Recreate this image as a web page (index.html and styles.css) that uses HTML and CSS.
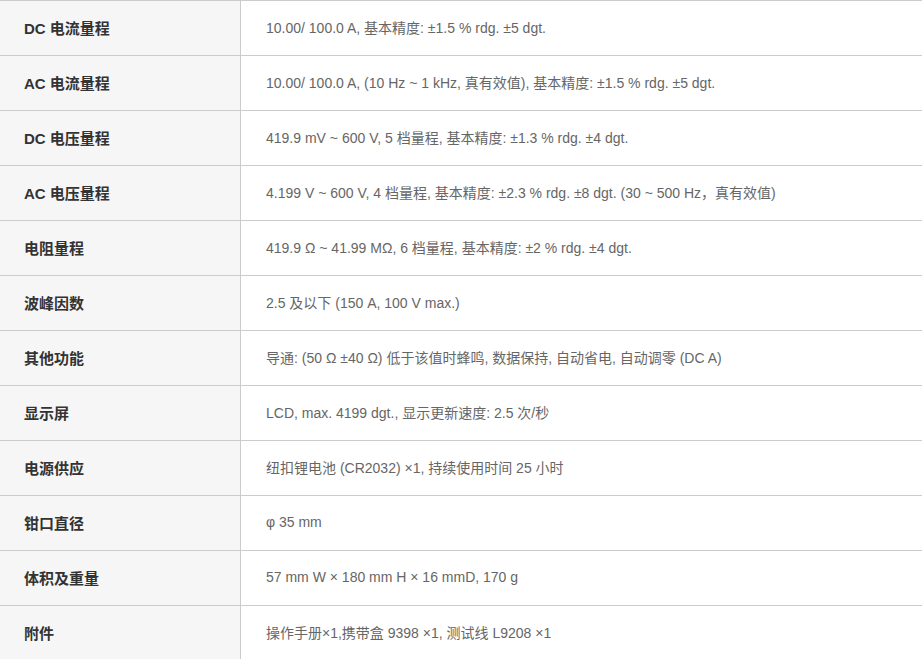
FILE: index.html
```html
<!DOCTYPE html>
<html lang="zh-CN">
<head>
<meta charset="utf-8">
<title>规格</title>
<link rel="stylesheet" href="styles.css">
</head>
<body>
<table class="spec">
<tbody>
<tr><th>DC 电流量程</th><td>10.00/ 100.0 A, 基本精度: ±1.5 % rdg. ±5 dgt.</td></tr>
<tr><th>AC 电流量程</th><td>10.00/ 100.0 A, (10 Hz ~ 1 kHz, 真有效值), 基本精度: ±1.5 % rdg. ±5 dgt.</td></tr>
<tr><th>DC 电压量程</th><td>419.9 mV ~ 600 V, 5 档量程, 基本精度: ±1.3 % rdg. ±4 dgt.</td></tr>
<tr><th>AC 电压量程</th><td>4.199 V ~ 600 V, 4 档量程, 基本精度: ±2.3 % rdg. ±8 dgt. (30 ~ 500 Hz，真有效值)</td></tr>
<tr><th>电阻量程</th><td>419.9 Ω ~ 41.99 MΩ, 6 档量程, 基本精度: ±2 % rdg. ±4 dgt.</td></tr>
<tr><th>波峰因数</th><td>2.5 及以下 (150 A, 100 V max.)</td></tr>
<tr><th>其他功能</th><td>导通: (50 Ω ±40 Ω) 低于该值时蜂鸣, 数据保持, 自动省电, 自动调零 (DC A)</td></tr>
<tr><th>显示屏</th><td>LCD, max. 4199 dgt., 显示更新速度: 2.5 次/秒</td></tr>
<tr><th>电源供应</th><td>纽扣锂电池 (CR2032) ×1, 持续使用时间 25 小时</td></tr>
<tr><th>钳口直径</th><td>φ 35 mm</td></tr>
<tr><th>体积及重量</th><td>57 mm W × 180 mm H × 16 mmD, 170 g</td></tr>
<tr><th>附件</th><td>操作手册×1,携带盒 9398 ×1, 测试线 L9208 ×1</td></tr>
</tbody>
</table>
</body>
</html>
```
FILE: styles.css
```css
html, body {
  margin: 0;
  padding: 0;
  background: #fff;
}
body {
  font-family: "Liberation Sans", Arial, "Noto Sans CJK SC", sans-serif;
  font-size: 14px;
}
.spec {
  width: 100%;
  border-collapse: collapse;
  border-top: 1px solid #ccc;
}
.spec tr {
  border-bottom: 1px solid #ccc;
}
.spec th,
.spec td {
  height: 52px;
  padding: 0 0 2px 0;
  vertical-align: middle;
  text-align: left;
}
.spec th {
  width: 216px;
  padding-left: 24px;
  background: #f6f6f6;
  border-right: 1px solid #ccc;
  color: #333;
  font-weight: bold;
  font-size: 15px;
}
.spec td {
  padding-left: 25px;
  color: #666;
}
```
